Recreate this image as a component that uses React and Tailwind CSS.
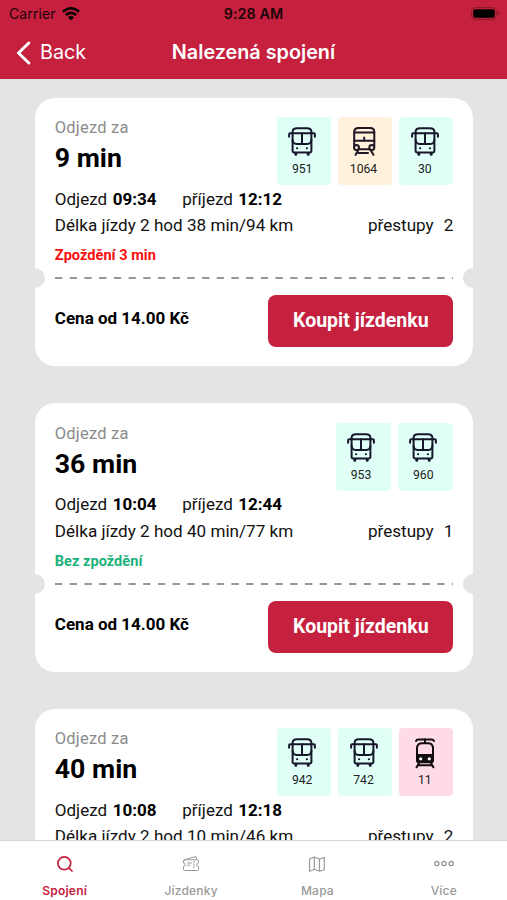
import React from "react";

const ROBOTO = "font-['Roboto','Liberation_Sans',sans-serif]";
const INTER = "font-['Inter','Liberation_Sans',sans-serif]";

function BusIcon() {
  return (
    <svg width="28" height="29" viewBox="0 0 28 29" fill="none" stroke="#17172b" strokeWidth="2" strokeLinecap="round" strokeLinejoin="round">
      <path d="M4.600 6.200V4.800Q4.600 1.200 9 1.200H19Q23.400 1.200 23.400 4.800V24Q23.400 25.400 22 25.400H6Q4.600 25.400 4.600 24Z" />
      <path d="M4.600 6.200H2.100Q1.100 6.200 1.100 7.200V9.800" />
      <path d="M23.400 6.200H25.900Q26.900 6.200 26.900 7.200V9.800" />
      <path d="M4.600 6.200H23.400" />
      <path d="M14 6.200V16.700" />
      <path d="M4.600 13Q5 16.900 8.500 16.900H19.500Q23 16.900 23.400 13" />
      <path d="M7.800 26.500V27.300M20.200 26.500V27.300" strokeWidth="3" />
      <path d="M9 21.300H9.200M18.800 21.300H19" strokeWidth="2" />
    </svg>
  );
}

function TrainIcon() {
  return (
    <svg width="28" height="29" viewBox="-3 0 28 29" fill="none" stroke="#1f1726" strokeWidth="2" strokeLinecap="round" strokeLinejoin="round">
      <path d="M1.200 19V5Q1.200 1 5.500 1H17Q21.300 1 21.300 5V19" />
      <path d="M1.200 5.600H21.300M1.200 13.800H21.300M11.200 10.400V13.800" />
      <circle cx="3.500" cy="20.600" r="2.500" />
      <circle cx="18.800" cy="20.600" r="2.500" />
      <path d="M6 22.200H16.500M5.300 23L2.600 27.800M17.600 23L20.400 27.800M5.500 26H15" />
    </svg>
  );
}

function TramIcon() {
  return (
    <svg width="28" height="31" viewBox="-4 0 28 31" fill="none" stroke="#130c10" strokeWidth="2" strokeLinecap="round" strokeLinejoin="round">
      <path d="M1 3Q1.400 1.400 3.500 1.400H16.500Q18.600 1.400 19 3" />
      <path d="M10 1.400V5" />
      <path d="M2 18V9.500Q2.600 5.200 7 5.200H13Q17.400 5.200 18 9.500V18Z" />
      <path d="M2 17H18V22.500Q18 24.300 16 24.300H4Q2 24.300 2 22.500Z" fill="#130c10" />
      <circle cx="5.700" cy="20.800" r="1.600" fill="#fff" stroke="none" />
      <circle cx="14.300" cy="20.800" r="1.600" fill="#fff" stroke="none" />
      <path d="M4 25L1.600 29.300M16 25L18.400 29.300M3.500 27.200H16.500" />
    </svg>
  );
}

const CHIP = {
  bus: { bg: "bg-[#dffff7]", Icon: BusIcon },
  train: { bg: "bg-[#fff1dc]", Icon: TrainIcon },
  tram: { bg: "bg-[#ffdbe9]", Icon: TramIcon },
};

function Chip({ type, label, wide }) {
  const { bg, Icon } = CHIP[type];
  return (
    <div className={`flex h-[68px] flex-col items-center rounded ${wide ? "w-[55px]" : "w-[54px]"} ${bg}`}>
      <div className={`flex h-[43px] items-start pt-[10px] ${wide ? "pr-[5px]" : "pr-[2.500px]"}`}>
        <Icon />
      </div>
      <span className={`text-[12.200px] leading-[18px] text-[#222] ${wide ? "pr-[5px]" : "pr-[3px]"}`}>{label}</span>
    </div>
  );
}

function Card({ trip }) {
  const wide = trip.lines.length < 3;
  return (
    <section className="relative h-[268.500px] w-[437.500px] shrink-0 rounded-[20px] bg-white px-[19.500px] pt-[19.500px]">
      <div className="flex h-[68px] justify-between">
        <div className="flex flex-col">
          <span className="text-[16.500px] leading-[22px] tracking-[0.2px] text-[#8b8b8b]">Odjezd za</span>
          <span className="mt-[3px] text-[26.700px] font-bold leading-[32px] text-black">{trip.wait}</span>
        </div>
        <div className="flex gap-[7.300px]">
          {trip.lines.map(([type, label]) => (
            <Chip key={label} type={type} label={label} wide={wide} />
          ))}
        </div>
      </div>
      <div className="mt-[3.500px] flex h-[22px] items-center text-[17px] text-[#111]">
        <span className="w-[58px]">Odjezd</span>
        <b className="w-[69.500px] text-black">{trip.dep}</b>
        <span className="w-[56px]">příjezd</span>
        <b className="text-black">{trip.arr}</b>
      </div>
      <div className="mt-[4px] flex h-[23px] items-center justify-between whitespace-nowrap text-[17.100px] text-[#111]">
        <span>Délka jízdy {trip.length}</span>
        <span className="flex gap-[10px]">
          <span>přestupy</span>
          <span>{trip.changes}</span>
        </span>
      </div>
      <div className={`mt-[7.500px] h-[20px] text-[14.600px] font-bold leading-[20px] ${trip.late ? "text-[#fb0d0d]" : "text-[#1cb07a]"}`}>{trip.status}</div>
      <svg className="mt-[12px] block h-[2px] w-[398.500px]">
        <path d="M0 1H398.500" stroke="#979797" strokeWidth="2" strokeDasharray="7.350 7.350" />
      </svg>
      <span className="absolute -left-[10px] top-[170.500px] size-5 rounded-full bg-[#e4e4e4]" />
      <span className="absolute -right-[10px] top-[170.500px] size-5 rounded-full bg-[#e4e4e4]" />
      <div className="mt-[16px] flex h-[52px] items-center justify-between">
        <span className="pb-[4px] text-[17px] font-bold text-black">Cena od 14.00 Kč</span>
        <button className="h-[52px] w-[185px] rounded-lg bg-[#c5203e] text-[19.500px] font-bold text-white">Koupit jízdenku</button>
      </div>
    </section>
  );
}

const TRIPS = [
  { wait: "9 min", lines: [["bus", "951"], ["train", "1064"], ["bus", "30"]], dep: "09:34", arr: "12:12", length: "2 hod 38 min/94 km", changes: 2, late: true, status: "Zpoždění 3 min" },
  { wait: "36 min", lines: [["bus", "953"], ["bus", "960"]], dep: "10:04", arr: "12:44", length: "2 hod 40 min/77 km", changes: 1, late: false, status: "Bez zpoždění" },
  { wait: "40 min", lines: [["bus", "942"], ["bus", "742"], ["tram", "11"]], dep: "10:08", arr: "12:18", length: "2 hod 10 min/46 km", changes: 2, late: false, status: "Bez zpoždění" },
];

function SearchIcon() {
  return (
    <svg width="18" height="18" viewBox="0 0 18 18" fill="none" stroke="#c5203e" strokeWidth="1.700" strokeLinecap="round">
      <circle cx="8.300" cy="8.300" r="6.400" />
      <path d="M12.800 12.800L16 16" />
    </svg>
  );
}

function TicketIcon() {
  return (
    <svg width="18" height="18" viewBox="0 0 18 18" fill="none" stroke="#999" strokeWidth="1" strokeLinejoin="round" strokeLinecap="round">
      <path d="M2.500 4.800H15.500Q16.500 4.800 16.500 5.800V8Q14.800 8.200 14.800 9.800Q14.800 11.300 16.500 11.500V14.500Q16.500 15.500 15.500 15.500H2.500Q1.500 15.500 1.500 14.500V11.500Q3.200 11.300 3.200 9.800Q3.200 8.200 1.500 8V5.800Q1.500 4.800 2.500 4.800Z" />
      <path d="M3 4.500L13.800 1.500L14.800 4.500M5.500 8H9.500M5.500 10.200H8M12 6.500V7.500M12 9V10M12 11.500V12.500" />
    </svg>
  );
}

function MapIcon() {
  return (
    <svg width="18" height="18" viewBox="0 0 18 18" fill="none" stroke="#999" strokeWidth="1.200" strokeLinejoin="round">
      <path d="M1.500 4L6.300 2L11.500 4L16.300 2.600V14.700L11.500 16.300L6.300 14.300L1.500 16.300ZM6.300 2V14.300M11.500 4V16.300" />
    </svg>
  );
}

function MoreIcon() {
  return (
    <svg width="22" height="18" viewBox="0 0 22 18" fill="none" stroke="#8e8e8e" strokeWidth="1.200">
      <circle cx="3.800" cy="8.500" r="2.200" />
      <circle cx="11" cy="8.500" r="2.200" />
      <circle cx="18.200" cy="8.500" r="2.200" />
    </svg>
  );
}

const TABS = [
  ["Spojení", SearchIcon, true],
  ["Jízdenky", TicketIcon, false],
  ["Mapa", MapIcon, false],
  ["Více", MoreIcon, false],
];

export default function App() {
  return (
    <div className={`flex h-[900px] w-[507px] flex-col overflow-hidden bg-[#e4e4e4] ${ROBOTO}`}>
      <header className={`h-[79px] shrink-0 bg-[#c5203e] ${INTER}`}>
        <div className="grid h-[27px] grid-cols-3 items-center pl-[9px] pr-[7px] text-[14px] text-[#1a0408]">
          <div className="flex items-center gap-[6px]">
            <span className="tracking-[0.1px]">Carrier</span>
            <svg width="18" height="14" viewBox="0 0 18 14" fill="none" stroke="#000" strokeWidth="2.500">
              <path d="M.9 4.800Q9-2.200 17.100 4.800" />
              <path d="M3.900 8Q9 3.700 14.100 8" />
              <path d="M9 13.500L5.900 10.300Q9 7.800 12.100 10.300Z" fill="#000" stroke="none" />
            </svg>
          </div>
          <span className="pr-[2px] text-center text-[14.300px] font-semibold tracking-[0.1px]">9:28 AM</span>
          <svg className="justify-self-end" width="29" height="13" viewBox="0 0 29 13">
            <rect x=".6" y=".6" width="24.800" height="11.800" rx="3.500" fill="none" stroke="#8a182d" />
            <rect x="2.200" y="2.200" width="21.600" height="8.600" rx="2" fill="#000" />
            <path d="M27 4.500Q28.500 5 28.500 6.500T27 8.500Z" fill="#8a182d" />
          </svg>
        </div>
        <div className="grid h-[51px] grid-cols-[120px_1fr_120px] items-center text-white">
          <div className="flex items-center pl-[16px]">
            <svg width="15" height="24" viewBox="0 0 15 24" fill="none" stroke="#fff" strokeWidth="3" strokeLinecap="round" strokeLinejoin="round">
              <path d="M12.800 2L2.500 12L12.800 22" />
            </svg>
            <span className="ml-[9px] text-[19.800px]">Back</span>
          </div>
          <span className="pt-px text-center text-[19.800px] font-semibold">Nalezená spojení</span>
        </div>
      </header>
      <main className="flex min-h-0 flex-1 flex-col gap-[37px] overflow-hidden pl-[35.300px] pt-[18.500px]">
        {TRIPS.map((trip) => (
          <Card key={trip.wait} trip={trip} />
        ))}
      </main>
      <nav className={`grid h-[60px] shrink-0 grid-cols-4 border-t border-[#d5d5d5] bg-white pl-[1.500px] ${INTER}`}>
        {TABS.map(([label, Icon, active]) => (
          <div key={label} className="flex flex-col items-center pt-[14px]">
            <Icon />
            <span className={`mt-[10px] text-[12px] leading-[16px] tracking-[0.2px] ${active ? "font-semibold text-[#c5203e]" : "font-medium text-[#999]"}`}>{label}</span>
          </div>
        ))}
      </nav>
    </div>
  );
}
